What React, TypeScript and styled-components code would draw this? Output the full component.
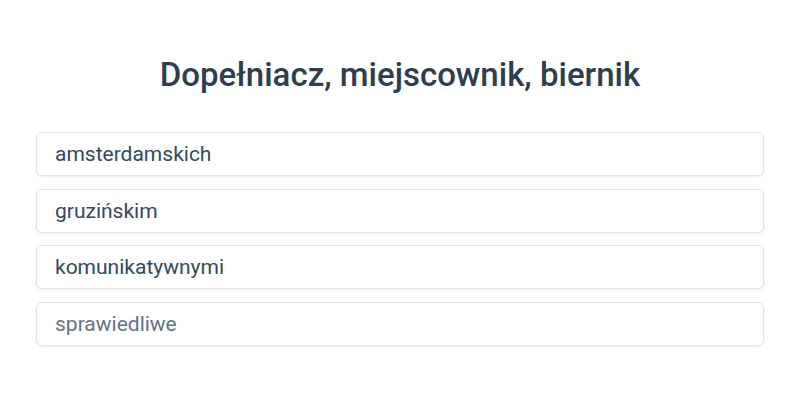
import React from "react";
import styled, { createGlobalStyle } from "styled-components";

const GlobalStyle = createGlobalStyle`
  html, body {
    margin: 0;
    padding: 0;
    background: #ffffff;
    font-family: Roboto, "Noto Sans", sans-serif;
  }
`;

const words = [
  { id: 1, text: "amsterdamskich" },
  { id: 2, text: "gruzińskim" },
  { id: 3, text: "komunikatywnymi" },
  { id: 4, text: "sprawiedliwe", faded: true },
];

type ItemProps = {
  $faded?: boolean;
};

const App: React.FC = () => {
  return (
    <>
      <GlobalStyle />
      <Page>
        <Title>Dopełniacz, miejscownik, biernik</Title>
        <List>
          {words.map((word) => (
            <Item key={word.id} $faded={word.faded}>
              {word.text}
            </Item>
          ))}
        </List>
      </Page>
    </>
  );
};

const Page = styled.div`
  width: 800px;
  height: 400px;
  box-sizing: border-box;
  padding: 55px 36px 0;
`;

const Title = styled.h1`
  margin: 0 0 37px;
  text-align: center;
  font-size: 33px;
  line-height: 40px;
  font-weight: 500;
  color: #2c3e50;
`;

const List = styled.ul`
  list-style: none;
  margin: 0;
  padding: 0;
  display: flex;
  flex-direction: column;
  gap: 12.7px;
`;

const Item = styled.li<ItemProps>`
  height: 44px;
  box-sizing: border-box;
  display: flex;
  align-items: center;
  padding: 0 18px;
  border: 1px solid #e2e2e2;
  border-radius: 6px;
  box-shadow: 0 1px 3px rgba(0, 0, 0, 0.08);
  font-size: 21px;
  color: ${(props) => (props.$faded ? "#627488" : "#34495e")};
`;

export default App;
